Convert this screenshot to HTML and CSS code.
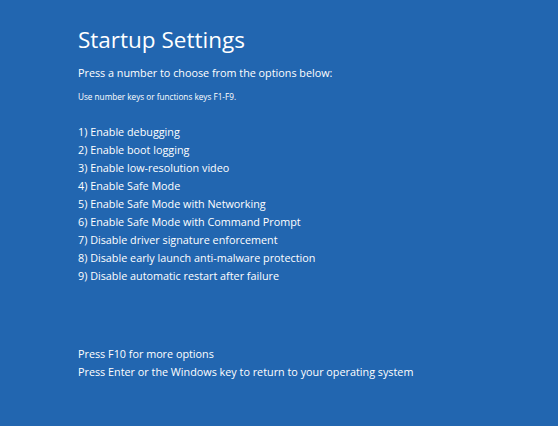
FILE: index.html
```html
<!DOCTYPE html>
<html>
<head>
<meta charset="utf-8">
<link rel="stylesheet" href="styles.css">
</head>
<body>
<main class="screen">
  <h1 class="title">Startup Settings</h1>
  <p class="lead">Press a number to choose from the options below:</p>
  <p class="hint">Use number keys or functions keys F1-F9.</p>
  <ol class="options">
    <li>1) Enable debugging</li>
    <li>2) Enable boot logging</li>
    <li>3) Enable low-resolution video</li>
    <li>4) Enable Safe Mode</li>
    <li>5) Enable Safe Mode with Networking</li>
    <li>6) Enable Safe Mode with Command Prompt</li>
    <li>7) Disable driver signature enforcement</li>
    <li>8) Disable early launch anti-malware protection</li>
    <li>9) Disable automatic restart after failure</li>
  </ol>
  <div class="footer">
    <p>Press F10 for more options</p>
    <p>Press Enter or the Windows key to return to your operating system</p>
  </div>
</main>
</body>
</html>
```
FILE: styles.css
```css
html, body {
  margin: 0;
  padding: 0;
  background: #2266b0;
}
.screen {
  width: 558px;
  height: 426px;
  box-sizing: border-box;
  padding: 24px 0 0 78px;
  color: #ffffff;
  font-family: "Open Sans", "Noto Sans", sans-serif;
  display: flex;
  flex-direction: column;
}
.title {
  margin: 0;
  font-weight: 400;
  font-size: 22.5px;
  line-height: 32px;
}
.lead {
  margin: 9px 0 0;
  font-size: 10.8px;
  line-height: 16px;
}
.hint {
  margin: 10px 0 0;
  font-size: 8.2px;
  line-height: 12px;
}
.options {
  list-style: none;
  margin: 20px 0 0;
  padding: 0;
  font-size: 10.8px;
  line-height: 18px;
}
.footer {
  margin-top: 60px;
  font-size: 10.8px;
  line-height: 18px;
}
.footer p {
  margin: 0;
}
```
